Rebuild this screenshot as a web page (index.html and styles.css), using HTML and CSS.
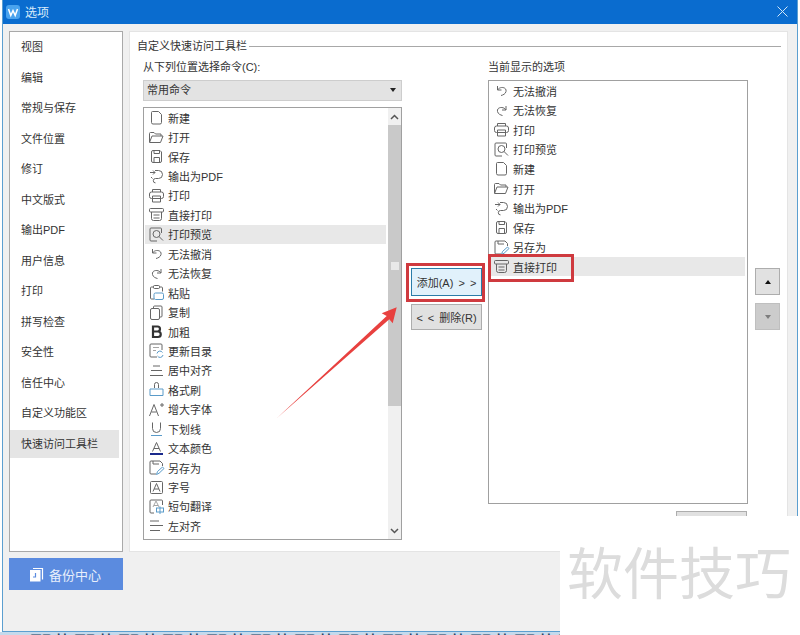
FILE: index.html
```html
<!DOCTYPE html>
<html lang="zh-CN">
<head>
    <meta charset="UTF-8">
    <meta name="viewport" content="width=device-width, initial-scale=1.0">
    <title>选项</title>
    <link rel="stylesheet" href="styles.css">
</head>
<body>
    <!-- 图标 -->
    <svg class="defs" width="0" height="0">
        <defs>
            <g id="i-new"><path d="M4.500 2.500h6l3 3v8a1.500 1.500 0 0 1-1.500 1.500H5a1.500 1.500 0 0 1-1.500-1.500V3.500a1 1 0 0 1 1-1z"/></g>
            <g id="i-open"><path d="M1.500 13V4.500a1 1 0 0 1 1-1h3.500l1.500 1.500h5.500v2"/><path d="M1.500 13.500l2.500-6.500h11l-2.500 6.500z"/></g>
            <g id="i-save"><path d="M5 2.500h7l1.500 1.500v9a1.500 1.500 0 0 1-1.500 1.500H5A1.500 1.500 0 0 1 3.500 13V4A1.500 1.500 0 0 1 5 2.500z"/><path d="M6 2.500v3h5.500v-3"/><path d="M6 14.500V9.500h5.500v5"/></g>
            <g id="i-pdf"><path d="M7 2.500h3.500a4 4 0 0 1 0 8H7.500"/><path d="M7.500 10.500a2.200 2.200 0 1 0 0 4.400"/><path d="M2 4.500h5M5 2.500l2 2-2 2"/><path d="M3 9l1.500 1.500"/></g>
            <g id="i-print"><path d="M4.500 5V2.500h8V5"/><rect x="1.500" y="5" width="14" height="6.500" rx="2"/><path d="M4.500 9h8v6h-8z"/></g>
            <g id="i-direct"><rect x="1.500" y="2.500" width="14" height="3.500" rx="1"/><path d="M3.500 6v6.500a2 2 0 0 0 2 2h6a2 2 0 0 0 2-2V6"/><path d="M5.500 9h6M5.500 12h6"/></g>
            <g id="i-preview"><path d="M13.500 7V3a1 1 0 0 0-1-1H3a1 1 0 0 0-1 1v11a1 1 0 0 0 1 1h6"/><circle cx="8.500" cy="8" r="3.500"/><path d="M11 10.500l4 4"/></g>
            <g id="i-undo"><path d="M4.500 4v4h4"/><path d="M4.500 8C7 4 14 5 13 9.500 12.500 12 10 13 8 13.500"/></g>
            <g id="i-redo"><path d="M13 4v4H9"/><path d="M13 8C10.500 4 3.500 5 4.500 9.500 5 12 7.500 13 9.500 13.500"/></g>
            <g id="i-paste"><path d="M6 3H3.500a1 1 0 0 0-1 1v10a1 1 0 0 0 1 1H6"/><path d="M11 3h2.500a1 1 0 0 1 1 1v3.500"/><rect x="5.500" y="1.500" width="6" height="3" rx="1"/><rect class="tint" x="6" y="9" width="9.500" height="6.500" rx="1.500"/></g>
            <g id="i-copy"><path d="M5.500 4.500V3a1 1 0 0 1 1-1H13a1 1 0 0 1 1 1v9a1 1 0 0 1-1 1h-1.500"/><rect x="2.500" y="4.500" width="9" height="11" rx="1.500"/></g>
            <g id="i-bold"><path class="thick" d="M5 3.500h4.500a2.500 2.500 0 0 1 0 5H5zM5 8.500h5a2.700 2.700 0 0 1 0 5.500H5z"/></g>
            <g id="i-toc"><path d="M9 15H3a1 1 0 0 1-1-1V3a1 1 0 0 1 1-1h10a1 1 0 0 1 1 1v5"/><path class="soft" d="M5 5.500h6M5 8.500h3"/><path class="tint" d="M9 11.500a3 3 0 0 1 5.500-1M15 13a3 3 0 0 1-5.500 1"/></g>
            <g id="i-center"><path d="M5 4h7M3 8.500h11M2 13.500h13"/></g>
            <g id="i-brush"><path d="M6.500 7V3.500a2 2 0 0 1 4 0V7"/><path class="tint" d="M2 8h13v6.500H2z"/></g>
            <g id="i-grow"><path d="M1.500 15L6 3.500 10.500 15M3.500 11h5"/><path d="M12 4h4M14 2v4"/></g>
            <g id="i-under"><path d="M4.500 2.500v6a4 4 0 0 0 8 0v-6"/><path class="tint" d="M3 15.500h11"/></g>
            <g id="i-color"><path d="M4.500 11.500L8.500 2.500l4 9M6 8.500h5"/><rect class="navy" x="2" y="13" width="13" height="2"/></g>
            <g id="i-saveas"><path d="M8 15H3a1 1 0 0 1-1-1V3a1 1 0 0 1 1-1h9l2.500 2.500V7"/><path d="M5 2v3h6"/><path class="tint" d="M8.500 15.500l1-3 5-4.500 1.500 1.500-5 4.800z"/></g>
            <g id="i-size"><rect x="2.500" y="2.500" width="12" height="12" rx="1"/><path d="M5 12.500l3.500-8 3.500 8M6.200 10h4.600"/></g>
            <g id="i-trans"><path d="M14.500 7V3a1 1 0 0 0-1-1H3a1 1 0 0 0-1 1v11a1 1 0 0 0 1 1h3"/><path class="soft" d="M5 9l3-6 3 6M6 7.500h4"/><rect class="tint" x="8.500" y="10" width="7" height="4"/><path class="tint" d="M12 8.500v7.500"/></g>
            <g id="i-left"><path d="M2 4h9M2 8.500h13M2 13.500h10"/></g>
        </defs>
    </svg>

    <div class="window">
        <div class="titlebar">
            <span class="app-logo">
                <svg width="14" height="14" viewBox="0 0 14 14"><path d="M2.500 4l2.300 6.500L7 5.500l2.200 5L11.500 4"/></svg>
            </span>
            <span class="title">选项</span>
            <svg class="close" width="11" height="11" viewBox="0 0 11 11"><path d="M.5.500l10 10M10.500.500l-10 10"/></svg>
        </div>

        <div class="content">
            <div class="side">
                <ul class="nav">
                    <li>视图</li>
                    <li>编辑</li>
                    <li>常规与保存</li>
                    <li>文件位置</li>
                    <li>修订</li>
                    <li>中文版式</li>
                    <li>输出PDF</li>
                    <li>用户信息</li>
                    <li>打印</li>
                    <li>拼写检查</li>
                    <li>安全性</li>
                    <li>信任中心</li>
                    <li>自定义功能区</li>
                    <li class="active">快速访问工具栏</li>
                </ul>
                <button class="backup">
                    <svg width="15" height="15" viewBox="0 0 15 15"><path class="page-back" d="M4 1.500h9.500v11"/><rect x="1" y="3" width="10.500" height="11.500" fill="#fff"/><path class="clock" d="M6.500 6v4H4"/></svg>
                    备份中心
                </button>
            </div>

            <div class="panel">
                <div class="legend"><span>自定义快速访问工具栏</span></div>
                <div class="columns">
                    <div class="col-left">
                        <div class="label">从下列位置选择命令(C):</div>
                        <div class="select">常用命令<span class="select-arrow"></span></div>
                        <div class="list list-left">
                            <div class="rows">
                                <div class="row"><svg class="ico"><use href="#i-new"/></svg>新建</div>
                                <div class="row"><svg class="ico"><use href="#i-open"/></svg>打开</div>
                                <div class="row"><svg class="ico"><use href="#i-save"/></svg>保存</div>
                                <div class="row"><svg class="ico"><use href="#i-pdf"/></svg>输出为PDF</div>
                                <div class="row"><svg class="ico"><use href="#i-print"/></svg>打印</div>
                                <div class="row"><svg class="ico"><use href="#i-direct"/></svg>直接打印</div>
                                <div class="row selected"><svg class="ico"><use href="#i-preview"/></svg>打印预览</div>
                                <div class="row"><svg class="ico"><use href="#i-undo"/></svg>无法撤消</div>
                                <div class="row"><svg class="ico"><use href="#i-redo"/></svg>无法恢复</div>
                                <div class="row"><svg class="ico"><use href="#i-paste"/></svg>粘贴</div>
                                <div class="row"><svg class="ico"><use href="#i-copy"/></svg>复制</div>
                                <div class="row"><svg class="ico"><use href="#i-bold"/></svg>加粗</div>
                                <div class="row"><svg class="ico"><use href="#i-toc"/></svg>更新目录</div>
                                <div class="row"><svg class="ico"><use href="#i-center"/></svg>居中对齐</div>
                                <div class="row"><svg class="ico"><use href="#i-brush"/></svg>格式刷</div>
                                <div class="row"><svg class="ico"><use href="#i-grow"/></svg>增大字体</div>
                                <div class="row"><svg class="ico"><use href="#i-under"/></svg>下划线</div>
                                <div class="row"><svg class="ico"><use href="#i-color"/></svg>文本颜色</div>
                                <div class="row"><svg class="ico"><use href="#i-saveas"/></svg>另存为</div>
                                <div class="row"><svg class="ico"><use href="#i-size"/></svg>字号</div>
                                <div class="row"><svg class="ico"><use href="#i-trans"/></svg>短句翻译</div>
                                <div class="row"><svg class="ico"><use href="#i-left"/></svg>左对齐</div>
                            </div>
                            <div class="scrollbar">
                                <div class="scroll-btn"><svg width="9" height="6" viewBox="0 0 9 6"><path d="M1 5l3.500-3.500L8 5"/></svg></div>
                                <div class="thumb"><span class="grip"></span></div>
                                <div class="scroll-rest"></div>
                                <div class="scroll-btn"><svg width="9" height="6" viewBox="0 0 9 6"><path d="M1 1l3.500 3.500L8 1"/></svg></div>
                            </div>
                        </div>
                    </div>

                    <div class="col-mid">
                        <button class="btn btn-add">添加(A) &gt; &gt;</button>
                        <button class="btn">&lt; &lt; 删除(R)</button>
                    </div>

                    <div class="col-right">
                        <div class="label">当前显示的选项</div>
                        <div class="list list-right">
                            <div class="row"><svg class="ico"><use href="#i-undo"/></svg>无法撤消</div>
                            <div class="row"><svg class="ico"><use href="#i-redo"/></svg>无法恢复</div>
                            <div class="row"><svg class="ico"><use href="#i-print"/></svg>打印</div>
                            <div class="row"><svg class="ico"><use href="#i-preview"/></svg>打印预览</div>
                            <div class="row"><svg class="ico"><use href="#i-new"/></svg>新建</div>
                            <div class="row"><svg class="ico"><use href="#i-open"/></svg>打开</div>
                            <div class="row"><svg class="ico"><use href="#i-pdf"/></svg>输出为PDF</div>
                            <div class="row"><svg class="ico"><use href="#i-save"/></svg>保存</div>
                            <div class="row"><svg class="ico"><use href="#i-saveas"/></svg>另存为</div>
                            <div class="row selected"><svg class="ico"><use href="#i-direct"/></svg>直接打印</div>
                        </div>
                        <div class="reset"></div>
                    </div>

                    <div class="col-order">
                        <button class="order"><span class="tri-up"></span></button>
                        <button class="order off"><span class="tri-down"></span></button>
                    </div>
                </div>
            </div>
        </div>
    </div>
    <div class="cut-text">那些那些那些那些那些那些那些那些那些那些那些那些那些那些那些那些那些那些那些</div>

    <!-- 标注 -->
    <div class="mark mark-add"></div>
    <div class="mark mark-item"></div>
    <svg class="arrow" width="130" height="130" viewBox="0 0 130 130"><path d="M7 121L116.700 19 111.700 16.300 126.700 10.300 122.700 26.300 119.300 22.300z"/></svg>
    <div class="watermark">软件技巧</div>
</body>
</html>
```

FILE: styles.css
```css
* {
    box-sizing: border-box;
}
body {
    position: relative;
    width: 800px;
    height: 635px;
    margin: 0;
    overflow: hidden;
    background: #fff;
    color: #333;
    font-family: "Liberation Sans", "Noto Sans CJK SC", sans-serif;
    font-size: 11px;
}
.defs {
    position: absolute;
}
button {
    font-family: inherit;
    color: inherit;
    padding: 0;
}

/* 窗口 */
.window {
    display: flex;
    flex-direction: column;
    width: 796px;
    height: 632px;
    margin-left: 2px;
    background: #f0f0f0;
    border: 1px solid #5c9fd0;
    border-top: none;
}
.titlebar {
    display: flex;
    align-items: center;
    flex: none;
    height: 24px;
    padding: 0 9px 1px 3px;
    background: #0a6ccf;
    color: #d8ebfa;
    font-size: 12px;
}
.app-logo {
    display: flex;
    align-items: center;
    justify-content: center;
    width: 14px;
    height: 14px;
    margin-right: 5px;
    border-radius: 3px;
    background: #4aa3ee;
}
.app-logo path {
    fill: none;
    stroke: #fff;
    stroke-width: 1.500;
}
.title {
    flex: 1;
}
.close path {
    fill: none;
    stroke: #cfe6f8;
    stroke-width: 1;
}
.content {
    display: flex;
    flex: 1;
    gap: 6px;
    min-height: 0;
    padding: 7px 9px 0 6px;
}

/* 左侧导航 */
.side {
    display: flex;
    flex-direction: column;
    flex: none;
    gap: 6px;
    width: 114px;
}
.nav {
    display: flex;
    flex-direction: column;
    height: 521px;
    margin: 0;
    padding: 0 3px 0 0;
    list-style: none;
    background: #fff;
    border: 1px solid #a9a9a9;
}
.nav li {
    flex: none;
    height: 30.540px;
    padding-left: 11px;
    line-height: 30.540px;
}
.nav .active {
    height: 28px;
    margin: 1px 0;
    line-height: 28px;
    background: #e5e5e5;
}
.backup {
    display: flex;
    align-items: center;
    justify-content: center;
    gap: 5px;
    height: 32px;
    padding-right: 2px;
    background: #5b8bdf;
    border: none;
    color: #e8effb;
    font-size: 13px;
}
.page-back {
    fill: none;
    stroke: #fff;
    stroke-width: 1.200;
}
.clock {
    fill: none;
    stroke: #5b8bdf;
    stroke-width: 1.200;
}

/* 右侧面板 */
.panel {
    flex: 1;
    height: 521px;
    padding: 8px 6px 0 7px;
    overflow: hidden;
    background: #fff;
    border: 1px solid #e4e4e4;
}
.legend {
    display: flex;
    align-items: center;
    gap: 2px;
    height: 12px;
    line-height: 12px;
}
.legend::after {
    content: "";
    flex: 1;
    border-top: 1px solid #a8a8a8;
}
.columns {
    display: flex;
    margin-top: 8px;
    padding-left: 6px;
}
.label {
    height: 14px;
    margin-bottom: 6px;
    line-height: 14px;
}
.col-left {
    flex: none;
    width: 259px;
}
.select {
    position: relative;
    height: 21px;
    margin-bottom: 6px;
    padding-left: 3px;
    line-height: 19px;
    background: #e3e3e3;
    border: 1px solid #cdcdcd;
}
.select-arrow {
    position: absolute;
    right: 5px;
    top: 7px;
    border-top: 4px solid #222;
    border-left: 3.500px solid transparent;
    border-right: 3.500px solid transparent;
}
.list {
    background: #fff;
    border: 1px solid #a0a0a0;
}
.list-left {
    display: flex;
    height: 433px;
    padding: 0 0 0 1px;
}
.rows {
    flex: 1;
}
.row {
    display: flex;
    align-items: center;
    height: 19.450px;
    padding-left: 3px;
    margin-right: 2px;
}
.ico {
    flex: none;
    width: 17px;
    height: 17px;
    margin-right: 3px;
    fill: none;
    stroke: #666;
    stroke-width: 1;
}
.tint {
    stroke: #5a9bc9;
}
.soft {
    stroke: #a5a5a5;
}
.thick {
    stroke: #333;
    stroke-width: 2.200;
}
.navy {
    fill: #1a2a8c;
    stroke: none;
}
.row.selected {
    background: #e8e8e8;
}

/* 滚动条 */
.scrollbar {
    display: flex;
    flex-direction: column;
    flex: none;
    width: 13px;
    background: #f0f0f0;
}
.scroll-btn {
    display: flex;
    align-items: center;
    justify-content: center;
    flex: none;
    height: 17px;
}
.scroll-btn path {
    fill: none;
    stroke: #555;
    stroke-width: 1.500;
}
.thumb {
    display: flex;
    align-items: center;
    justify-content: center;
    flex: none;
    height: 281px;
    background: #c9c9c9;
}
.grip {
    width: 8px;
    height: 8px;
    background: #e9e9e9;
}
.scroll-rest {
    flex: 1;
}

/* 中间按钮 */
.col-mid {
    display: flex;
    flex-direction: column;
    flex: none;
    gap: 8px;
    width: 86px;
    padding: 208px 0 0 9px;
}
.btn {
    width: 71px;
    height: 26px;
    background: #e1e1e1;
    border: 1px solid #adadad;
    font-size: 11px;
    word-spacing: 2px;
}
.btn-add {
    height: 28px;
    background: #e1f1fb;
    border-color: #2a7ca8;
}
.col-right {
    flex: none;
    width: 260px;
}
.list-right {
    height: 424px;
    padding: 0 0 0 1px;
}
.list-right .row {
    height: 19.550px;
}
.reset {
    width: 71px;
    height: 20px;
    margin: 7px 1px 0 auto;
    background: #e1e1e1;
    border: 1px solid #adadad;
}

/* 排序按钮 */
.col-order {
    display: flex;
    flex-direction: column;
    flex: none;
    gap: 8px;
    width: 25px;
    margin-left: 7px;
    padding-top: 208px;
}
.order {
    display: flex;
    align-items: center;
    justify-content: center;
    height: 27px;
    background: #e1e1e1;
    border: 1px solid #adadad;
}
.order.off {
    background: #cccccc;
    border-color: #bfbfbf;
}
.tri-up {
    border-bottom: 4px solid #111;
    border-left: 3.500px solid transparent;
    border-right: 3.500px solid transparent;
}
.tri-down {
    border-top: 4px solid #7d7d7d;
    border-left: 3.500px solid transparent;
    border-right: 3.500px solid transparent;
}

/* 底部被截断的文字 */
.cut-text {
    width: 560px;
    height: 3px;
    padding-left: 30px;
    overflow: hidden;
    background: #c5daec;
    color: #26425f;
    font-size: 22px;
    line-height: 26px;
    white-space: nowrap;
}

/* 标注和水印 */
.mark {
    position: absolute;
    border: 3px solid #cf3a3f;
}
.mark-add {
    left: 406px;
    top: 263px;
    width: 79px;
    height: 39px;
}
.mark-item {
    left: 488px;
    top: 254px;
    width: 86px;
    height: 28px;
}
.arrow {
    position: absolute;
    left: 270px;
    top: 297px;
}
.arrow path {
    fill: #e8413f;
}
.watermark {
    position: absolute;
    left: 560px;
    top: 516px;
    width: 240px;
    height: 119px;
    padding: 29px 0 0 7px;
    background: #fff;
    color: #dcdcdc;
    font-size: 56px;
    line-height: 60px;
    white-space: nowrap;
}
```
